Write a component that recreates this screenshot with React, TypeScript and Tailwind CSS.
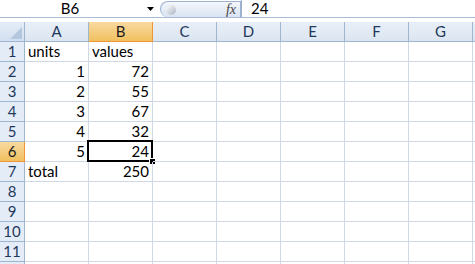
import React from 'react'

const COLS = ['A', 'B', 'C', 'D', 'E', 'F', 'G', 'H']

type Cell = { v: string; num?: boolean }

const DATA: Record<number, Record<string, Cell>> = {
  1: { A: { v: 'units' }, B: { v: 'values' } },
  2: { A: { v: '1', num: true }, B: { v: '72', num: true } },
  3: { A: { v: '2', num: true }, B: { v: '55', num: true } },
  4: { A: { v: '3', num: true }, B: { v: '67', num: true } },
  5: { A: { v: '4', num: true }, B: { v: '32', num: true } },
  6: { A: { v: '5', num: true }, B: { v: '24', num: true } },
  7: { A: { v: 'total' }, B: { v: '250', num: true } },
}

const ROWS = [1, 2, 3, 4, 5, 6, 7, 8, 9, 10, 11, 12]

function FormulaBar() {
  return (
    <div className="flex h-[18px] items-stretch border-b border-[#a7bad7] bg-white">
      <div className="flex w-[140px] items-center justify-center text-[15px] text-black">B6</div>
      <div className="flex w-[20px] items-center justify-center">
        <svg width="7" height="4" viewBox="0 0 7 4"><path d="M0 0h7L3.5 4z" fill="#000" /></svg>
      </div>
      <div className="relative mt-[1px] flex w-[81px] items-center justify-end rounded-l-[9px] border border-b-0 border-[#9db1d1] bg-gradient-to-b from-[#f4f7fc] to-[#d9e3f1] pr-[4px]">
        <span className="absolute left-[5px] top-[3px] h-[10px] w-[10px] rounded-full bg-gradient-to-br from-[#ffffff] to-[#aab5c4]" />
        <span className="font-['Liberation_Serif',serif] text-[14px] italic text-[#444]">fx</span>
      </div>
      <div className="flex flex-1 items-center border-l border-[#9db1d1] pl-[9px] text-[15px] text-black">24</div>
    </div>
  )
}

export default function App() {
  return (
    <div className="h-[264px] w-[475px] overflow-hidden bg-white font-['Lato','Open_Sans',sans-serif] text-[15px] leading-none text-black">
      <FormulaBar />
      <div className="h-[4px] bg-white" />
      {/* column headers */}
      <div className="flex h-[20px]">
        <div className="flex w-[25px] shrink-0 items-end justify-end border-r border-b border-[#9eb6ce] bg-gradient-to-b from-[#e4ecf7] to-[#d3dff0] p-[2px]">
          <svg width="12" height="12" viewBox="0 0 12 12"><path d="M12 0v12H0z" fill="#b5c7df" /></svg>
        </div>
        {COLS.map(c => (
          <div
            key={c}
            className={
              c === 'B'
                ? 'flex w-[64px] shrink-0 items-center justify-center border-r border-b border-[#f29536] bg-gradient-to-b from-[#f9d99f] to-[#f1c15f] text-[#1c1c1c]'
                : 'flex w-[64px] shrink-0 items-center justify-center border-r border-b border-[#9eb6ce] bg-gradient-to-b from-[#e9eff8] to-[#dbe5f1] text-[#1e395b]'
            }
          >
            {c === 'H' ? '' : c}
          </div>
        ))}
      </div>
      {ROWS.map(r => (
        <div key={r} className="flex h-[20px]">
          <div
            className={
              r === 6
                ? 'flex w-[25px] shrink-0 items-center justify-center border-r border-b border-[#f29536] bg-gradient-to-b from-[#f9d99f] to-[#f1c15f] text-[#1c1c1c]'
                : 'flex w-[25px] shrink-0 items-center justify-center border-r border-b border-[#9eb6ce] bg-[#e4ecf7] text-[#1e395b]'
            }
          >
            {r === 12 ? '' : r}
          </div>
          {COLS.map(c => {
            const cell = DATA[r]?.[c]
            const selected = r === 6 && c === 'B'
            return (
              <div
                key={c}
                className={
                  'relative flex w-[64px] shrink-0 items-end border-r border-b border-[#d0d7e5] pb-[2px] ' +
                  (cell?.num ? 'justify-end pr-[3px]' : 'justify-start pl-[3px]')
                }
              >
                {cell?.v}
                {selected && (
                  <>
                    <span className="absolute -left-[2px] -top-[2px] bottom-[-1px] right-[-1px] border-2 border-black" />
                    <span className="absolute -bottom-[4px] -right-[4px] h-[7px] w-[7px] border border-white bg-black" />
                  </>
                )}
              </div>
            )
          })}
        </div>
      ))}
    </div>
  )
}
